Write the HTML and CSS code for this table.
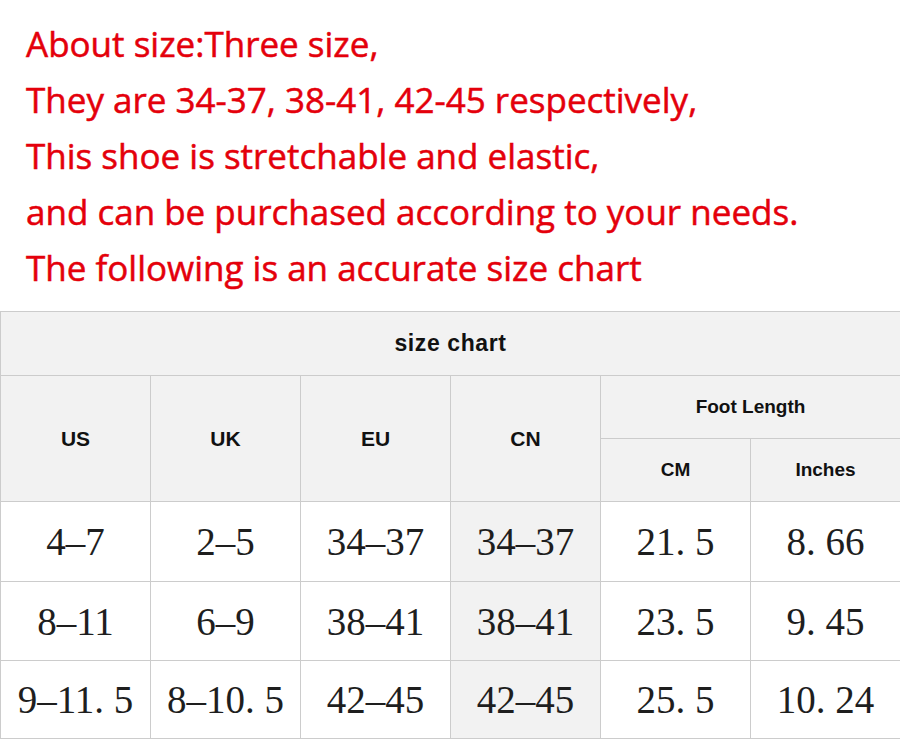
FILE: index.html
```html
<!DOCTYPE html>
<html>
<head>
<meta charset="utf-8">
<link rel="stylesheet" href="styles.css">
</head>
<body>
<div class="page">
  <div class="intro">
    <p>About size:Three size,</p>
    <p>They are 34-37, 38-41, 42-45 respectively,</p>
    <p>This shoe is stretchable and elastic,</p>
    <p>and can be purchased according to your needs.</p>
    <p>The following is an accurate size chart</p>
  </div>
  <table class="chart">
    <colgroup>
      <col class="c"><col class="c"><col class="c"><col class="c"><col class="c"><col class="c-last">
    </colgroup>
    <tr class="r-title"><th colspan="6" class="title">size chart</th></tr>
    <tr class="r-h1">
      <th rowspan="2" class="hd">US</th>
      <th rowspan="2" class="hd">UK</th>
      <th rowspan="2" class="hd">EU</th>
      <th rowspan="2" class="hd">CN</th>
      <th colspan="2" class="sub">Foot Length</th>
    </tr>
    <tr class="r-h2">
      <th class="sub">CM</th>
      <th class="sub">Inches</th>
    </tr>
    <tr class="r-d1">
      <td>4–7</td><td>2–5</td><td>34–37</td><td class="cn">34–37</td><td>21<span class="pt">.</span>5</td><td>8<span class="pt">.</span>66</td>
    </tr>
    <tr class="r-d2">
      <td>8–11</td><td>6–9</td><td>38–41</td><td class="cn">38–41</td><td>23<span class="pt">.</span>5</td><td>9<span class="pt">.</span>45</td>
    </tr>
    <tr class="r-d3">
      <td>9–11<span class="pt">.</span>5</td><td>8–10<span class="pt">.</span>5</td><td>42–45</td><td class="cn">42–45</td><td>25<span class="pt">.</span>5</td><td>10<span class="pt">.</span>24</td>
    </tr>
  </table>
</div>
</body>
</html>
```

FILE: styles.css
```css
html, body {
  margin: 0;
  padding: 0;
  background: #ffffff;
  overflow: hidden;
}
.page {
  width: 900px;
  height: 740px;
}
.intro {
  padding: 16px 0 0 26px;
  height: 311px;
  box-sizing: border-box;
}
.intro p {
  margin: 0;
  font-family: "Open Sans", "Noto Sans", sans-serif;
  font-size: 35px;
  line-height: 56px;
  color: #e4000b;
  -webkit-text-stroke: 0.5px #e4000b;
  white-space: nowrap;
}
.chart {
  border-collapse: collapse;
  table-layout: fixed;
  width: 900px;
}
.chart col.c { width: 150px; }
.chart col.c-last { width: 150px; }
.chart th, .chart td {
  border: 1px solid #cccccc;
  padding: 0;
  text-align: center;
  vertical-align: middle;
}
.chart th {
  background: #f2f2f2;
  font-family: "Liberation Sans", Arial, sans-serif;
  font-weight: bold;
  color: #111111;
}
.title {
  font-size: 23px;
  letter-spacing: 0.6px;
}
.hd { font-size: 21px; }
.sub { font-size: 19px; }
.r-title { height: 64px; }
.r-h1 { height: 63px; }
.r-h2 { height: 63px; }
.r-d1 { height: 80px; }
.r-d2 { height: 79px; }
.r-d3 { height: 78px; }
.chart td {
  font-family: "Liberation Serif", "Times New Roman", serif;
  font-size: 39px;
  color: #1e1e1e;
  background: #ffffff;
}
.chart td.cn { background: #f2f2f2; }
.pt { margin-right: 0.25em; }
```
